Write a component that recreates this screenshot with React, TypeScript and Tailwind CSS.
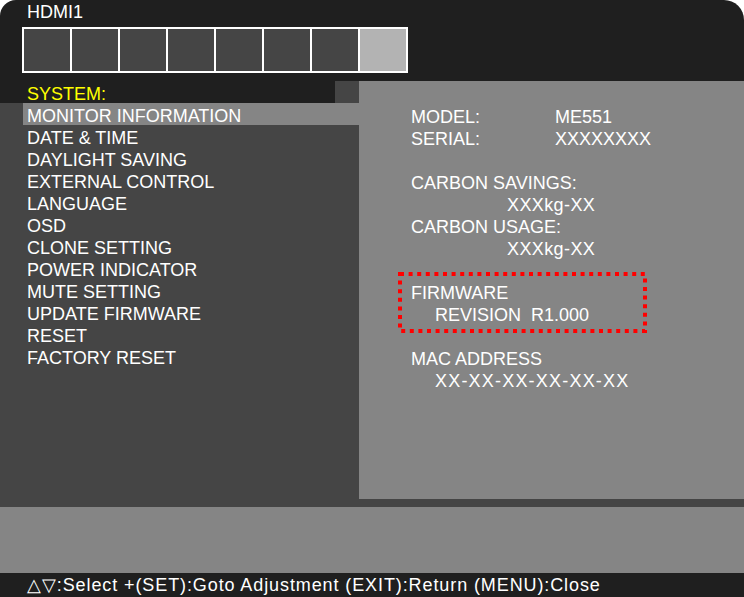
const DARK = 'bg-[#1f1f1f]'

const menuItems = [
  'DATE & TIME',
  'DAYLIGHT SAVING',
  'EXTERNAL CONTROL',
  'LANGUAGE',
  'OSD',
  'CLONE SETTING',
  'POWER INDICATOR',
  'MUTE SETTING',
  'UPDATE FIRMWARE',
  'RESET',
  'FACTORY RESET',
]

function Row({ children, indent = 0, className = '' }: { children?: React.ReactNode; indent?: number; className?: string }) {
  return (
    <div className={`h-[22px] pt-[2px] leading-[22px] whitespace-pre ${className}`} style={{ paddingLeft: indent }}>
      {children}
    </div>
  )
}

export default function App() {
  return (
    <div
      className="w-[744px] h-[597px] bg-white overflow-hidden text-white text-[18px]"
      style={{ fontFamily: '"Liberation Sans", Arial, sans-serif' }}
    >
      <div className={`h-full flex flex-col rounded-tl-[16px] rounded-tr-[20px] ${DARK}`}>
        {/* header */}
        <div className="h-[81px] shrink-0 pl-[22px]">
          <div className="pl-[5px] pt-[1px] h-[27px] leading-[22px]">HDMI1</div>
          <div className="w-[386px] h-[46px] border-2 border-white bg-white flex gap-[2px]">
            {Array.from({ length: 8 }).map((_, i) => (
              <div key={i} className={`flex-1 ${i === 7 ? 'bg-[#b3b3b3]' : 'bg-[#454545]'}`} />
            ))}
          </div>
        </div>

        {/* body */}
        <div className="h-[418px] shrink-0 flex">
          <div className="w-[359px] bg-[#454545]">
            <div className="h-[22px] flex">
              <div className={`w-[335px] ${DARK} pl-[27px] pt-[2px] leading-[22px] text-[#ffff00]`}>SYSTEM:</div>
            </div>
            <div className="ml-[23px] h-[22px] pt-[2px] leading-[22px] bg-[#858585] pl-[4px]">MONITOR INFORMATION</div>
            <div className="pl-[27px]">
              {menuItems.map(m => <Row key={m}>{m}</Row>)}
            </div>
          </div>

          <div className="flex-1 bg-[#858585] pt-[23px] pl-[52px]">
            <div className="flex h-[22px] pt-[2px] leading-[22px]">
              <span className="w-[144px]">MODEL:</span><span>ME551</span>
            </div>
            <div className="flex h-[22px] pt-[2px] leading-[22px]">
              <span className="w-[144px]">SERIAL:</span><span>XXXXXXXX</span>
            </div>
            <Row />
            <Row>CARBON SAVINGS:</Row>
            <Row indent={96} className="tracking-[0.4px]">XXXkg-XX</Row>
            <Row>CARBON USAGE:</Row>
            <Row indent={96} className="tracking-[0.4px]">XXXkg-XX</Row>
            <Row />
            <div className="relative">
              <Row>FIRMWARE</Row>
              <Row indent={24}>REVISION  R1.000</Row>
              <svg className="absolute left-[-13px] top-[-8px]" width="249" height="61">
                <rect x="2" y="2" width="245" height="57" fill="none" stroke="#ff0000" strokeWidth="4" strokeDasharray="4 4.6" />
              </svg>
            </div>
            <Row />
            <Row>MAC ADDRESS</Row>
            <Row indent={24} className="tracking-[1.2px]">XX-XX-XX-XX-XX-XX</Row>
          </div>
        </div>

        <div className="h-[8px] shrink-0 bg-[#454545]" />
        <div className="h-[66px] shrink-0 bg-[#858585]" />

        {/* footer */}
        <div className="flex-1 pl-[27px] leading-[24px] whitespace-pre tracking-[0.9px]">
          △▽:Select +(SET):Goto Adjustment (EXIT):Return (MENU):Close
        </div>
      </div>
    </div>
  )
}
